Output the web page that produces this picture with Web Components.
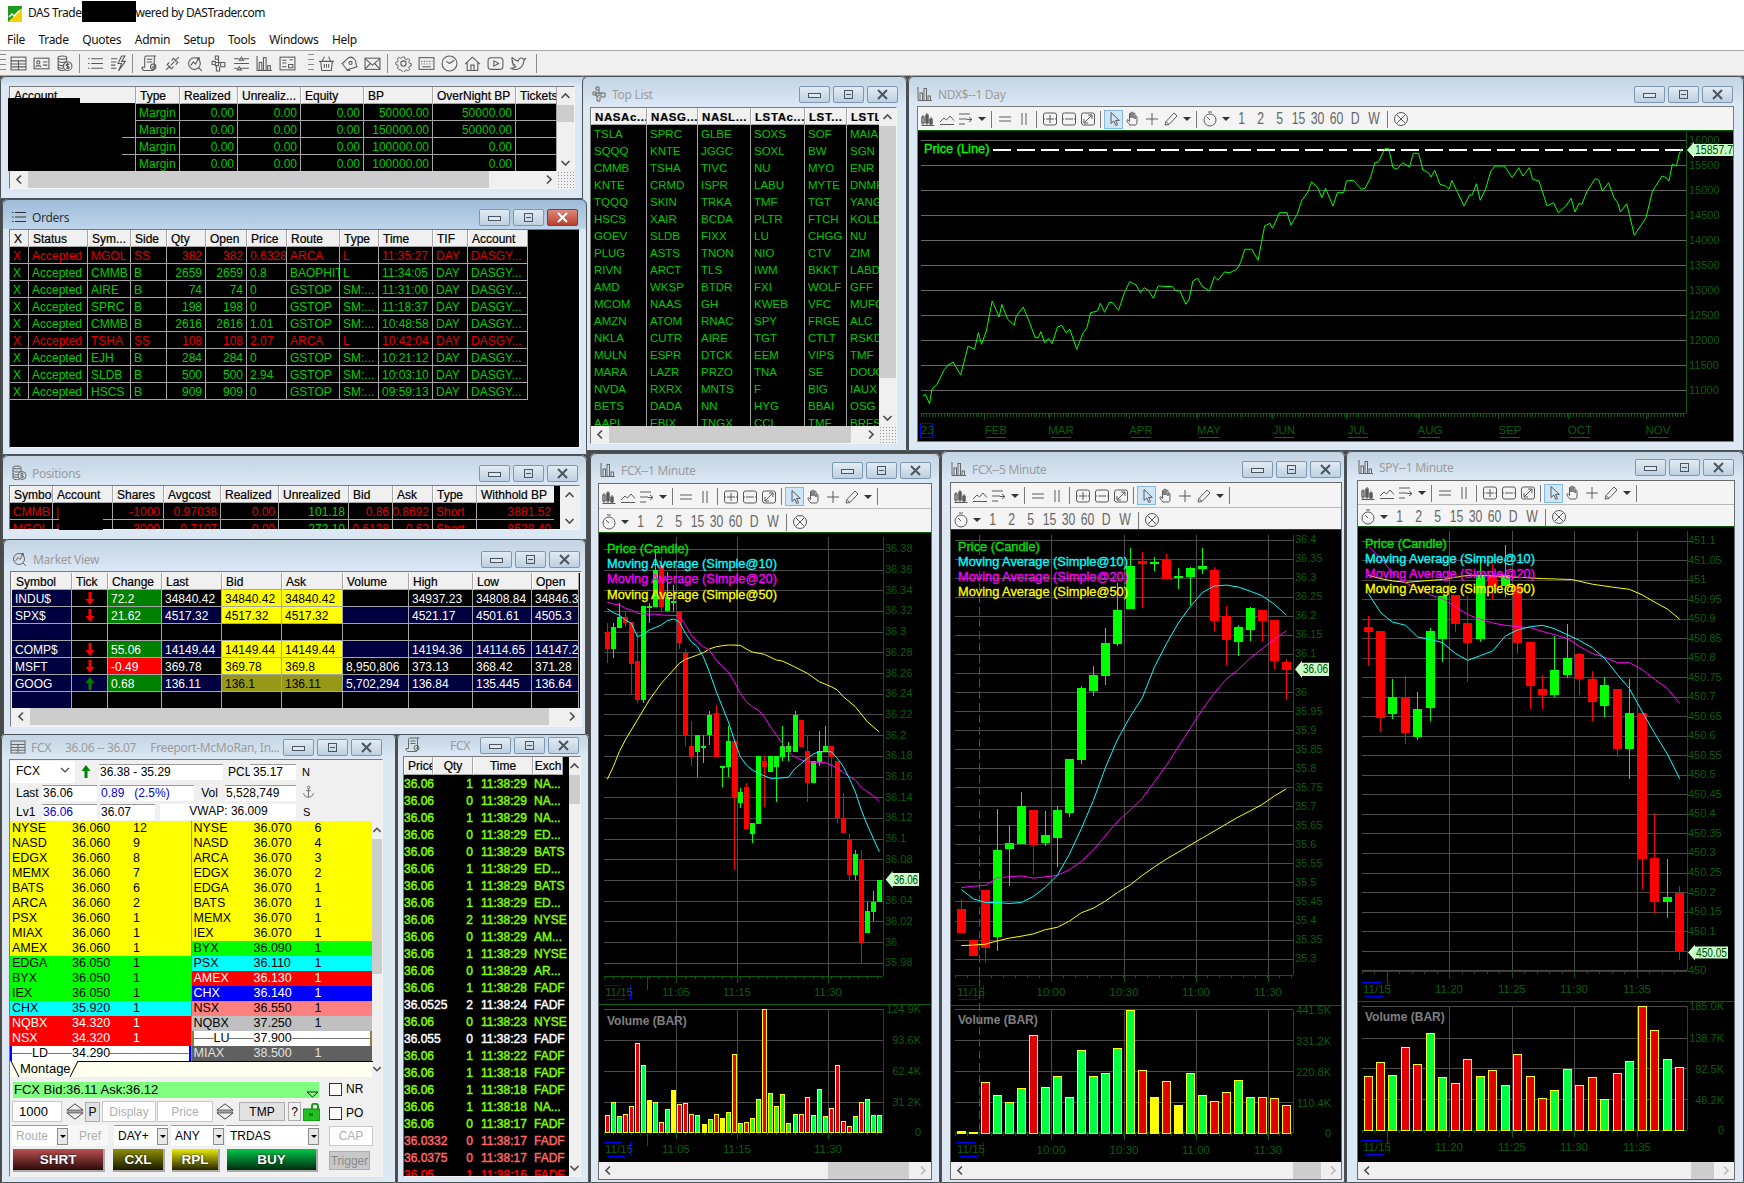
<!doctype html>
<html>
<head>
<meta charset="utf-8">
<title>DAS Trader</title>
<style>
  html, body { margin: 0; background: #4a4a4a; overflow: hidden; }
  body { width: 1744px; height: 1183px; display: flex; flex-direction: column; font-family: "Liberation Sans", Arial, sans-serif; }
</style>
</head>
<body>
<app-header></app-header>
<das-desktop>
  <das-window name="" style="left:0;top:0;width:587px;height:123px;--tb:10px;--ml:9px;--mr:12px;--mb:10px;--nobtn:none">
    <das-pane v="0,17" h="0,461" grip><das-grid data="account"></das-grid></das-pane>
  </das-window>
  <black-box style="left:8px;top:22px;width:72px;height:5px"></black-box>
  <black-box style="left:8px;top:27px;width:127px;height:33px"></black-box>
  <black-box style="left:8px;top:60px;width:114px;height:35px"></black-box>

  <das-window name="Top List" icon="cubes" style="left:582px;top:0;width:325px;height:375px;--tb:31px;--ml:8px;--mr:10px;--mb:7px;--tp:10px;--br:9px;--pl:9px">
    <das-pane v="0,252" h="0,242" grip><das-grid data="toplist"></das-grid></das-pane>
  </das-window>

  <das-window name="NDX$--1 Day" icon="bars" style="left:908px;top:0;width:836px;height:375px;--tb:30px;--ml:9px;--mr:10px;--mb:9px;--tp:10px;--br:11px;--pl:9px;--cb:#7a7a7a">
    <chart-toolbar single style="--rh1:23px"></chart-toolbar>
    <das-chart data="ndx"></das-chart>
  </das-window>

  <das-window name="FCX--1 Minute" icon="bars" style="left:590px;top:377px;width:350px;height:730px;--tb:30px;--ml:8px;--mr:8px;--mb:3px;--tp:9px;--br:9px;--pl:10px;--cb:#6a6a6a">
    <chart-toolbar style="--rh1:24px;--rh2:24px"></chart-toolbar>
    <das-chart data="c1"></das-chart>
    <das-scrollbar orient="h" start="211" len="81" dim style="height:17px"></das-scrollbar>
  </das-window>

  <das-window name="FCX--5 Minute" icon="bars" style="left:941px;top:375px;width:404px;height:732px;--tb:31px;--ml:9px;--mr:3px;--mb:3px;--tp:10px;--br:4px;--pl:10px;--cb:#6a6a6a">
    <chart-toolbar style="--rh1:24px;--rh2:22px"></chart-toolbar>
    <das-chart data="c2"></das-chart>
    <das-scrollbar orient="h" start="324" len="28" dim style="height:17px"></das-scrollbar>
  </das-window>

  <das-window name="SPY--1 Minute" icon="bars" style="left:1346px;top:375px;width:398px;height:732px;--tb:29px;--ml:11px;--mr:9px;--mb:3px;--tp:8px;--br:10px;--pl:12px;--cb:#6a6a6a">
    <chart-toolbar style="--rh1:23px;--rh2:22px"></chart-toolbar>
    <das-chart data="c3"></das-chart>
    <das-scrollbar orient="h" start="315" len="23" dim style="height:17px"></das-scrollbar>
  </das-window>

  <das-window name="Orders" icon="list" active style="left:2px;top:123px;width:585px;height:256px;--tb:30px;--ml:7px;--mr:7px;--mb:7px;--tp:10px;--br:9px;--pl:9px">
    <das-grid data="orders"></das-grid>
  </das-window>

  <das-window name="Positions" icon="coins" style="left:2px;top:379px;width:585px;height:85px;--tb:30px;--ml:7px;--mr:7px;--mb:10px;--tp:10px;--br:9px;--pl:9px">
    <das-pane v="x" vw="19"><das-grid data="positions"></das-grid></das-pane>
  </das-window>
  <black-box style="left:59px;top:428px;width:44px;height:26px"></black-box>

  <das-window name="FCX     36.06 -- 36.07     Freeport-McMoRan, In..." icon="table" style="left:1px;top:657px;width:395px;height:450px;--tb:26px;--ml:8px;--mr:13px;--mb:6px;--tp:6px;--br:14px;--pl:9px">
    <fcx-montage></fcx-montage>
  </das-window>

  <das-window name="FCX" icon="scroll" style="left:397px;top:657px;width:192px;height:450px;--tb:23px;--ml:6px;--mr:8px;--mb:6px;--tp:4px;--br:10px;--pl:8px;--nm:24px">
    <das-pane v="0,29" vw="11"><das-grid data="tns"></das-grid></das-pane>
  </das-window>

  <das-window name="Market View" icon="magnifier" style="left:3px;top:463px;width:583px;height:196px;--tb:32px;--ml:7px;--mr:4px;--mb:8px;--tp:12px;--br:6px;--pl:9px;--pad:1px">
    <das-pane h="0,519"><das-grid data="market"></das-grid></das-pane>
  </das-window>
</das-desktop>

<script>
const FONT = '"Liberation Sans", Arial, sans-serif';
const UI_FONT = '"Noto Sans", "Open Sans", Arial, sans-serif';

const ICONS = {
  table: '<rect x="1" y="2" width="14" height="12"/><path d="M1 5.5h14M8 5.5V14M1 8.5h14M1 11.2h14"/>',
  card: '<rect x="1" y="3" width="14" height="10"/><circle cx="5" cy="7" r="1.5"/><path d="M2.5 11.5c.5-2 4.5-2 5 0M9.5 6.5h4M9.5 9.5h4"/>',
  coins: '<ellipse cx="6" cy="2.5" rx="4" ry="1.5"/><path d="M2 2.5V13c0 2 6 2 7 .8M2 5.5c0 2 8 2 8 0M2 8.5c0 1.6 4 1.8 6 1M2 11c0 1 3 1.5 5 1.5M10 2.5v3"/><circle cx="11" cy="10.5" r="4"/><path d="M12.5 9c-1-.8-3-.5-3 .6s3 .7 3 2-2 1.2-3 .5M11 7.5v6"/>',
  list: '<path d="M1 3.5h1.5M4 3.5h11M1 8h1.5M4 8h11M1 12.5h1.5M4 12.5h11"/>',
  bolt: '<path d="M1 3.5h6M1 6.5h5M1 9.5h4M1 12.5h5M11 1 7.5 8H11l-3 7 6.5-9H11L14 1z"/>',
  scroll: '<path d="M3 14.5h8c1 0 1.5-1 1.5-2v-10c0-1 .5-1.5 1.5-1.5H5c-1 0-1.5.5-1.5 1.5v9H1c0 2 1 3 2 3zM5.5 4h5M5.5 6.5h5"/><circle cx="11.5" cy="11" r="2.5"/><path d="m10.5 11 .8.8 1.5-1.5"/>',
  link: '<path d="M2 14 6 10M14 2l-4 4M5 7l-2 2 4 4 2-2M7 5l2-2 4 4-2 2M6.5 9.5l3-3"/>',
  magnifier: '<circle cx="7" cy="8" r="5.5"/><path d="m11 12 3 3M3.5 10 6 6.5l2 2L11 3M9 2.5h2.5V5"/>',
  cubes: '<path d="M5 1h3v3H5zM2 6h3v3H2zM8 4v3h3M5 7h3v3H5zM10 7h4v4h-4zM6 10v5h3v-4"/>',
  sliders: '<path d="M1 3.5h5M10 3.5h5M6 5l2-3 2 3zM1 8h14M1 12.5h3M8 12.5h7M4 14l2-3 2 3z"/>',
  bars: '<path d="M1 1v13.5h14"/><rect x="3" y="7" width="2.5" height="7.5"/><rect x="7" y="2.5" width="2.5" height="12"/><rect x="11" y="10" width="2.5" height="4.5"/>',
  price: '<rect x="1" y="2" width="14" height="12"/><path d="M3 5h4M3 7.5h4M9 9h4v3H9zM3 11h4M10 4.5h3"/>',
  basket: '<path d="M1 6h14M6 1.5 4 6M10 1.5 12 6M2.5 6l1 8.5h9l1-8.5M6 8.5V12M8 8.5V12M10 8.5V12"/>',
  bell: '<path d="M1 8c3-1 4-6 8-6 3 0 5 3 5 5 0 3 1 4 1 4l-9 3s-1-1-5-6zM5 13c.5 1.5 2 2 3.5 1.3"/><circle cx="9" cy="7.5" r="1.5"/>',
  mail: '<rect x="1" y="3" width="14" height="10.5"/><path d="m1 3.5 7 6 7-6M1 13l5-5M15 13l-5-5"/>',
  gear: '<circle cx="8" cy="8" r="2.5"/><path d="M6.8 1h2.400l.4 2 1.700.7 1.700-1.100 1.700 1.700-1.100 1.700.7 1.700 2 .4v2.400l-2 .4-.7 1.700 1.100 1.700-1.700 1.700-1.700-1.100-1.700.7-.4 2H6.800l-.4-2-1.700-.7L3 14.600l-1.700-1.700 1.100-1.700-.7-1.700-2-.4V6.700l2-.4.7-1.700L1.300 3 3 1.300l1.700 1.100 1.700-.7z" transform="translate(1 1) scale(.875)"/>',
  keyboard: '<rect x="1" y="2.5" width="14" height="11"/><path d="M3 6h1M5.5 6h1M8 6h1M10.5 6h1M13 6h.5M3 8.5h1M5.5 8.5h1M8 8.5h1M10.5 8.5h1M13 8.5h.5M4 11h8"/>',
  clock: '<circle cx="8" cy="8" r="7"/><path d="M8 8 5 6M8 8l4.5-3"/>',
  home: '<path d="M1 8.5 8 2l7 6.5M3 7v7.5h10V7M6.5 14.5v-5h3v5"/>',
  play: '<rect x="1" y="2.5" width="14" height="11" rx="3"/><path d="M6.5 5.5v5L11 8z"/>',
  twitter: '<path d="M1 12.5c3 2 11 2 12-7l1.5-2-2 .5c-1-2-4.5-1.5-4.500 1.500C5.500 5.500 3.500 4 2 2.500c-.5 1.500 0 3 1 4l-1-.3c0 1.300 1 2.500 2 3l-1 .1c.5 1 1.500 1.500 2.500 1.700C4 12 2.500 12.500 1 12.500z"/>',
  candle: '<path d="M3 4v10M7 2v12M11 6v8M1.5 14.5h13"/><rect x="1.8" y="6" width="2.4" height="6"/><rect x="5.8" y="4" width="2.4" height="8" fill="currentColor"/><rect x="9.8" y="8" width="2.4" height="5" fill="currentColor"/>',
  mountain: '<path d="m1 11 4-4 2.5 2L11 5l4 4.5M1 13.5h14"/>',
  lines: '<path d="M1 3h11M1 8h8M1 13h6M11 6l3 2.5-3 2.5M14 8.5H9"/>',
  hh: '<path d="M2 6h12M2 10h12"/>',
  vv: '<path d="M6 2v12M10 2v12"/>',
  plus: '<rect x="1.5" y="2" width="13" height="12" rx="2"/><path d="M8 4v8M4 8h8M1 8h2M13 8h2"/>',
  minus: '<rect x="1.5" y="2" width="13" height="12" rx="2"/><path d="M4 8h8M1 8h2M13 8h2"/>',
  fit: '<rect x="1.5" y="2" width="13" height="12" rx="2"/><path d="m4 12 8-8M8 4h4v4M4 8v4h4"/>',
  arrow: '<path d="M5 1.5v11l2.8-2.500 2 4.500 1.800-.8-2-4.300h3.700z"/>',
  hand: '<path d="M5 14c-2-2-3.5-4-3-5s1.5 0 2.5 1.500V3c0-1.300 1.500-1.300 1.500 0v4-5c0-1.300 2-1.300 2 0v5-4c0-1.300 2-1.300 2 0v5-2c0-1.300 2-1.300 2 0v5c0 2-1 3-1.500 3z"/>',
  cross: '<path d="M8 2v12M2 8h12"/>',
  pencil: '<path d="m2 14 1-3.5L11 2l3 3-8 8.5zM3 10.5 5.5 13"/>',
  timer: '<circle cx="8" cy="9" r="6"/><path d="M8 9 5 6M6 1h4"/>',
  xcircle: '<circle cx="8" cy="8" r="6.5"/><path d="m4 4 8 8M12 4l-8 8"/>',
  anchor: '<circle cx="8" cy="3" r="1.5"/><path d="M8 4.5V15M5 7h6M2 10c0 3 3 5 6 5s6-2 6-5"/>'
};

class DasIcon extends HTMLElement {
  constructor() { super(); this.attachShadow({ mode: 'open' }); }
  connectedCallback() {
    const size = this.getAttribute('size') || 16;
    this.shadowRoot.innerHTML = `<style>:host{display:inline-flex;flex:none;color:#5a5a5a} svg{display:block;fill:none;stroke:currentColor;stroke-width:1}</style>
      <svg width="${size}" height="${size}" viewBox="0 0 16 16">${ICONS[this.getAttribute('name')] || ''}</svg>`;
  }
}
customElements.define('das-icon', DasIcon);

class AppHeader extends HTMLElement {
  constructor() {
    super();
    this.attachShadow({ mode: 'open' });
    const groups = [
      ['grip', 'table', 'card', 'coins', '|', 'list', 'bolt', '|b', 'scroll', 'link', 'magnifier', 'cubes', 'sliders', 'bars', 'price'],
      ['grip', 'basket', 'bell', 'mail', '|', 'gear', 'keyboard', 'clock', 'home', 'play', 'twitter', '|']
    ];
    const tools = groups.map(g => g.map(n => {
      if (n[0] === '|') return `<i class="sep ${n.slice(1)}"></i>`;
      if (n === 'grip') return '<i class="grip"></i>';
      return `<das-icon name="${n}" size="17"></das-icon>`;
    }).join('')).join('');
    this.shadowRoot.innerHTML = `
      <style>
        :host { display: block; flex: none; background: #fff; font: 12px ${UI_FONT}; color: #111; letter-spacing: -.3px; }
        .title { height: 28px; display: flex; align-items: center; padding-left: 8px; white-space: pre; letter-spacing: -.45px; }
        .title svg { margin-right: 6px; }
        .title b { display: inline-block; width: 54px; height: 21px; background: #000; margin-top: -5px; }
        .title span { margin-top: -4px; }
        .menu { height: 22px; display: flex; align-items: center; padding-left: 7px; gap: 13.5px; }
        .tools { box-sizing: border-box; height: 26px; background: #f0f0f0; border-top: 1px solid #a8a8a8; border-bottom: 1px solid #a8a8a8; display: flex; align-items: center; gap: 6px; padding-left: 10px; position: relative; }
        .sep { width: 1px; height: 19px; background: #8a8a8a; margin: 0 1px 0 0; }
        .sep.b { margin: 0 2px 0 -1px; }
        .sep:last-child { margin-left: 3px; }
        .grip { width: 6px; height: 18px; margin: 0 -2px 0 6px; background: repeating-linear-gradient(#8a8a8a 0 1px, transparent 1px 5px); }
        .grip:first-child { position: absolute; left: 0; margin: 0; }
      </style>
      <div class="title">
        <svg width="14" height="16" viewBox="0 0 14 16"><rect width="14" height="16" fill="#1c9c1c"/><path d="M0 16 14 2v14z" fill="#f6d000"/><path d="m1 11 3-3 2 2 6-6" stroke="#fff" fill="none" stroke-width="1.5"/></svg>
        <span>DAS Trade</span><b></b><span>wered by DASTrader.com</span>
      </div>
      <div class="menu"><span>File</span><span>Trade</span><span>Quotes</span><span>Admin</span><span>Setup</span><span>Tools</span><span>Windows</span><span>Help</span></div>
      <div class="tools">${tools}</div>`;
  }
}
customElements.define('app-header', AppHeader);

class DasDesktop extends HTMLElement {
  constructor() {
    super();
    this.attachShadow({ mode: 'open' });
    this.shadowRoot.innerHTML = `<style>:host{display:block;flex:1;position:relative;min-height:0;background:#4a4a4a}</style><slot></slot>`;
  }
}
customElements.define('das-desktop', DasDesktop);

class BlackBox extends HTMLElement {
  constructor() {
    super();
    this.attachShadow({ mode: 'open' });
    this.shadowRoot.innerHTML = `<style>:host{position:absolute;display:block;background:#000}</style>`;
  }
}
customElements.define('black-box', BlackBox);

class DasWindow extends HTMLElement {
  constructor() { super(); this.attachShadow({ mode: 'open' }); }
  connectedCallback() {
    const active = this.hasAttribute('active');
    const name = this.getAttribute('name');
    const icon = this.getAttribute('icon');
    this.shadowRoot.innerHTML = `
      <style>
        :host { position: absolute; display: flex; flex-direction: column; box-sizing: border-box; background: #dce8f4; border-radius: 6px 6px 0 0; outline: 1px solid #4c5358; outline-offset: -1px; overflow: hidden; }
        .bar { flex: none; height: var(--tb); box-sizing: border-box; padding: var(--tp, 0) var(--br, 0) 0 var(--pl, 0); display: flex; align-items: flex-start; gap: 3px;
          background: linear-gradient(${active ? '#9dbbd8, #bed5ea' : '#c2d3e2, #dce8f5'}); }
        .name { flex: 1; min-width: 0; font: 12px/17px ${UI_FONT}; letter-spacing: -.3px; color: ${active ? '#333' : '#9b9b9b'}; white-space: pre; overflow: hidden; display: flex; gap: 5px; }
        .name das-icon { margin-right: var(--nm, 0); color: ${active ? '#333' : '#666'}; }
        .btn { display: var(--nobtn, flex); width: 31px; height: 17px; flex: none; box-sizing: border-box; border: 1px solid #7f97ae; border-radius: 2px; align-items: center; justify-content: center; background: linear-gradient(#e2ebf4, #bdd0e1); }
        .btn.close { background: ${active ? 'linear-gradient(#dd8a7c, #b8402e)' : 'linear-gradient(#e2ebf4, #bdd0e1)'}; border-color: ${active ? '#8a3a30' : '#7f97ae'}; }
        .btn svg { fill: none; stroke: #4a5560; }
        .client { flex: 1; min-height: 0; margin: 0 var(--mr) var(--mb) var(--ml); box-sizing: border-box; display: flex; flex-direction: column; overflow: hidden; background: #f0f0f0; padding: var(--pad, 0);
          border: 1px solid; border-color: var(--cb, #7a7a7a) var(--cb, #f4f4f4) var(--cb, #f4f4f4) var(--cb, #7a7a7a); }
      </style>
      <div class="bar">
        <div class="name">${icon ? `<das-icon name="${icon}"></das-icon>` : ''}${name}</div>
        <div class="btn"><svg width="13" height="8"><rect x=".5" y="2.5" width="12" height="4" fill="#dfe7ef"/></svg></div>
        <div class="btn"><svg width="13" height="11"><rect x="2.5" y="1.5" width="8" height="8"/><path d="M4 5.5h5"/></svg></div>
        <div class="btn close"><svg width="13" height="11" style="stroke:${active ? '#fff' : '#4a5560'}"><path d="m2 1 9 9M11 1l-9 9" stroke-width="2"/></svg></div>
      </div>
      <div class="client"><slot></slot></div>`;
  }
}
customElements.define('das-window', DasWindow);

class DasScrollbar extends HTMLElement {
  constructor() { super(); this.attachShadow({ mode: 'open' }); }
  connectedCallback() {
    const h = this.getAttribute('orient') === 'h';
    const start = +this.getAttribute('start') || 0;
    const len = +this.getAttribute('len') || 0;
    const noThumb = this.hasAttribute('nothumb');
    const chev = (p, c) => `<div class="a"><svg width="11" height="11" viewBox="0 0 11 11"><path d="${p}" fill="none" stroke="${c}" stroke-width="1.7"/></svg></div>`;
    this.shadowRoot.innerHTML = `
      <style>
        :host { display: flex; flex: none; background: #f0f0f0; flex-direction: ${h ? 'row' : 'column'}; overflow: hidden; }
        .a { flex: none; ${h ? 'width:18px' : 'height:18px'}; display: flex; align-items: center; justify-content: center; }
        .t { flex: 1; min-width: 0; min-height: 0; display: flex; flex-direction: ${h ? 'row' : 'column'}; }
        .th { flex: none; background: #cdcdcd; ${h ? `margin-left:${start}px;width:${len}px` : `margin-top:${start}px;height:${len}px`}; }
        .grip { flex: none; width: 17px; background: radial-gradient(#9a9a9a 40%, transparent 45%) 9px 3px / 3px 3px; }
      </style>
      ${chev(h ? 'M7 1.5 3 5.5l4 4' : 'M1.5 7l4-4 4 4', '#505050')}
      <div class="t">${noThumb ? '' : '<div class="th"></div>'}</div>
      ${chev(h ? 'M4 1.5l4 4-4 4' : 'M1.5 4l4 4 4-4', this.hasAttribute('dim') ? '#bbb' : '#505050')}
      ${this.hasAttribute('grip') ? '<div class="grip"></div>' : ''}`;
  }
}
customElements.define('das-scrollbar', DasScrollbar);

class DasPane extends HTMLElement {
  constructor() { super(); this.attachShadow({ mode: 'open' }); }
  connectedCallback() {
    const v = this.getAttribute('v');
    const h = this.getAttribute('h');
    const vw = this.getAttribute('vw') || 17;
    const parts = s => (s || '').split(',');
    const vBar = v === 'x' ? `<das-scrollbar orient="v" nothumb style="width:${vw}px;margin-left:6px"></das-scrollbar>`
      : v ? `<das-scrollbar orient="v" start="${parts(v)[0]}" len="${parts(v)[1]}" style="width:${vw}px"></das-scrollbar>` : '';
    const hBar = h ? `<das-scrollbar orient="h" start="${parts(h)[0]}" len="${parts(h)[1]}" ${this.hasAttribute('grip') ? 'grip' : ''} style="height:17px"></das-scrollbar>` : '';
    this.shadowRoot.innerHTML = `
      <style>
        :host { display: flex; flex-direction: column; flex: 1; min-height: 0; }
        .top { flex: 1; min-height: 0; display: flex; background: #000; }
        slot { display: flex; flex: 1; min-width: 0; }
      </style>
      <div class="top"><slot></slot>${vBar}</div>${hBar}`;
  }
}
customElements.define('das-pane', DasPane);

const arrowSvg = (up, col) => `<svg width="12" height="15" viewBox="0 0 12 15" style="display:block;margin:0 auto"><path d="${up ? 'M6 1 1.5 7h3v7h3V7h3z' : 'M6 14 1.5 8h3V1h3v7h3z'}" fill="${col}"/></svg>`;

const tickers = [
  'TSLA SPRC GLBE SOXS SOF MAIA', 'SQQQ KNTE JGGC SOXL BW SGN', 'CMMB TSHA TIVC NU MYO ENR', 'KNTE CRMD ISPR LABU MYTE DNMR',
  'TQQQ SKIN TRKA TMF TGT YANG', 'HSCS XAIR BCDA PLTR FTCH KOLD', 'GOEV SLDB FIXX LU CHGG NU', 'PLUG ASTS TNON NIO CTV ZIM',
  'RIVN ARCT TLS IWM BKKT LABD', 'AMD WKSP BTDR FXI WOLF GFF', 'MCOM NAAS GH KWEB VFC MUFG', 'AMZN ATOM RNAC SPY FRGE ALC',
  'NKLA CUTR AIRE TGT CTLT RSKD', 'MULN ESPR DTCK EEM VIPS TMF', 'MARA LAZR PRZO TNA SE DOUG', 'NVDA RXRX MNTS F BIG IAUX',
  'BETS DADA NN HYG BBAI OSG', 'AAPL EBIX TNGX CCL TME BRFS'
].map(r => r.split(' '));

const navyCols = new Set([3, 6, 7, 8, 9]);
const GRIDS = {
  account: {
    cols: [126, 44, 58, 63, 63, 69, 83, 41], head: ['Account', 'Type', 'Realized', 'Unrealiz...', 'Equity', 'BP', 'OverNight BP', 'Tickets'],
    align: 'llrrrrrr', color: '#00c800',
    rows: [['', 'Margin', '0.00', '0.00', '0.00', '50000.00', '50000.00', ''], ['', 'Margin', '0.00', '0.00', '0.00', '150000.00', '50000.00', ''],
      ['', 'Margin', '0.00', '0.00', '0.00', '100000.00', '0.00', ''], ['', 'Margin', '0.00', '0.00', '0.00', '100000.00', '0.00', ''], ['', '', '', '', '', '', '', '']]
  },
  orders: {
    cols: [19, 59, 43, 36, 39, 41, 40, 53, 39, 54, 35, 60], head: ['X', 'Status', 'Sym...', 'Side', 'Qty', 'Open', 'Price', 'Route', 'Type', 'Time', 'TIF', 'Account'],
    align: 'llllrrllllll', color: '#00d000',
    rows: [
      ['X', 'Accepted', 'MGOL', 'SS', '382', '382', '0.6328', 'ARCA', 'L', '11:35:27', 'DAY', 'DASGY...'],
      ['X', 'Accepted', 'CMMB', 'B', '2659', '2659', '0.8', 'BAOPHIT', 'L', '11:34:05', 'DAY', 'DASGY...'],
      ['X', 'Accepted', 'AIRE', 'B', '74', '74', '0', 'GSTOP', 'SM:...', '11:31:00', 'DAY', 'DASGY...'],
      ['X', 'Accepted', 'SPRC', 'B', '198', '198', '0', 'GSTOP', 'SM:...', '11:18:37', 'DAY', 'DASGY...'],
      ['X', 'Accepted', 'CMMB', 'B', '2616', '2616', '1.01', 'GSTOP', 'SM:...', '10:48:58', 'DAY', 'DASGY...'],
      ['X', 'Accepted', 'TSHA', 'SS', '108', '108', '2.07', 'ARCA', 'L', '10:42:04', 'DAY', 'DASGY...'],
      ['X', 'Accepted', 'EJH', 'B', '284', '284', '0', 'GSTOP', 'SM:...', '10:21:12', 'DAY', 'DASGY...'],
      ['X', 'Accepted', 'SLDB', 'B', '500', '500', '2.94', 'GSTOP', 'SM:...', '10:03:10', 'DAY', 'DASGY...'],
      ['X', 'Accepted', 'HSCS', 'B', '909', '909', '0', 'GSTOP', 'SM:...', '09:59:13', 'DAY', 'DASGY...']
    ],
    style: (r) => (r === 0 || r === 5) ? 'color:#e00000' : ''
  },
  positions: {
    cols: [43, 60, 51, 57, 58, 70, 44, 40, 44, 78], head: ['Symbol', 'Account', 'Shares', 'Avgcost', 'Realized', 'Unrealized', 'Bid', 'Ask', 'Type', 'Withhold BP'],
    align: 'llrrrrrrlr', color: '#e00000',
    rows: [['CMMB', '|', '-1000', '0.97038', '0.00', '101.18', '0.86', '0.8692', 'Short', '3881.52'], ['MGOL', '|', '-3000', '0.7107', '0.00', '272.10', '0.6128', '0.62', 'Short', '8528.40']],
    style: (r, c) => c === 5 ? 'color:#00d000' : ''
  },
  market: {
    cols: [60, 36, 54, 60, 60, 61, 66, 64, 59, 47], head: ['Symbol', 'Tick', 'Change', 'Last', 'Bid', 'Ask', 'Volume', 'High', 'Low', 'Open'],
    align: 'lclllllllll', color: '#fff',
    rows: [
      ['INDU$', { h: arrowSvg(false, '#ff0000') }, '72.2', '34840.42', '34840.42', '34840.42', '', '34937.23', '34808.84', '34846.38'],
      ['SPX$', { h: arrowSvg(false, '#ff0000') }, '21.62', '4517.32', '4517.32', '4517.32', '', '4521.17', '4501.61', '4505.3'],
      ['', '', '', '', '', '', '', '', '', ''],
      ['COMP$', { h: arrowSvg(false, '#ff0000') }, '55.06', '14149.44', '14149.44', '14149.44', '', '14194.36', '14114.65', '14147.27'],
      ['MSFT', { h: arrowSvg(false, '#ff0000') }, '-0.49', '369.78', '369.78', '369.8', '8,950,806', '373.13', '368.42', '371.28'],
      ['GOOG', { h: arrowSvg(true, '#008000') }, '0.68', '136.11', '136.1', '136.11', '5,702,294', '136.84', '135.445', '136.64'],
      ['', '', '', '', '', '', '', '', '', '']
    ],
    style: (r, c, v) => {
      if (c === 0) return 'background:#000040';
      if (c === 1) return r === 5 ? 'background:#000040' : '';
      if (c === 2 && v) return v[0] === '-' ? 'background:#ff0000' : 'background:#008000';
      if ((c === 4 || c === 5) && v) return r === 5 ? 'background:#989818;color:#000' : 'background:#ffff00;color:#000';
      if (navyCols.has(c) && r % 2) return 'background:#000040';
      return '';
    }
  },
  toplist: {
    cols: [56, 51, 53, 54, 42, 33], head: ['NASAc...', 'NASG...', 'NASL...', 'LSTAc...', 'LST...', 'LSTL'], headStyle: 'font-weight:bold;letter-spacing:.6px;',
    align: 'llllll', color: '#00c800', rows: tickers, noRowLines: true, fontSize: 11.5
  },
  tns: {
    cols: [29, 40, 60, 30], head: ['Price', 'Qty', 'Time', 'Exch'], headAlign: 'lccc', headh: 18, free: true, align: 'lrll', filler: true,
    color: '#80ff00',
    rows: [
      ['36.06', '1', '11:38:29', 'NA...'], ['36.06', '0', '11:38:29', 'NA...'], ['36.06', '1', '11:38:29', 'NA...'], ['36.06', '0', '11:38:29', 'ED...'],
      ['36.06', '0', '11:38:29', 'BATS'], ['36.06', '1', '11:38:29', 'ED...'], ['36.06', '1', '11:38:29', 'BATS'], ['36.06', '1', '11:38:29', 'ED...'],
      ['36.06', '2', '11:38:29', 'NYSE'], ['36.06', '0', '11:38:29', 'AM...'], ['36.06', '1', '11:38:29', 'NYSE'], ['36.06', '0', '11:38:29', 'AR...'],
      ['36.06', '1', '11:38:28', 'FADF'], ['36.0525', '2', '11:38:24', 'FADF'], ['36.06', '0', '11:38:23', 'NYSE'], ['36.055', '0', '11:38:23', 'FADF'],
      ['36.06', '1', '11:38:22', 'FADF'], ['36.06', '1', '11:38:18', 'FADF'], ['36.06', '1', '11:38:18', 'FADF'], ['36.06', '1', '11:38:18', 'NA...'],
      ['36.06', '0', '11:38:17', 'FADF'], ['36.0332', '0', '11:38:17', 'FADF'], ['36.0375', '0', '11:38:17', 'FADF'], ['36.05', '1', '11:38:16', 'FADF']
    ],
    style: r => (r === 13 || r === 15) ? 'color:#fff' : (r === 21 || r === 22) ? 'color:#ff6666' : r === 23 ? 'color:#ff0000' : ''
  }
};

class DasGrid extends HTMLElement {
  constructor() { super(); this.attachShadow({ mode: 'open' }); }
  connectedCallback() {
    const g = GRIDS[this.getAttribute('data')];
    const al = { l: 'flex-start', r: 'flex-end', c: 'center' };
    const bar = '1px solid #a6a6a6';
    const cellCss = g.free
      ? 'overflow:visible;-webkit-text-stroke:.45px currentColor;padding:1px 0 0 0;'
      : `border-right:${bar};${g.noRowLines ? '' : `border-bottom:${bar};`}`;
    const freePad = c => g.free ? ['', '', 'padding-left:8px;', 'padding-left:1px;'][c] : '';
    const head = g.head.map((t, i) => `<div class="h" style="justify-content:${al[(g.headAlign || 'l'.repeat(20))[i]]};${g.headStyle || ''}">${t}</div>`).join('');
    const filler = g.filler ? '<div class="gap"></div>' : '';
    const rows = g.rows.map((row, r) => row.map((v, c) => {
      const txt = typeof v === 'object' ? v.h : v;
      const st = g.style ? g.style(r, c, typeof v === 'string' ? v : '') : '';
      return `<div class="c" style="justify-content:${al[g.align[c]]};${freePad(c)}${st}">${txt}</div>`;
    }).join('') + filler).join('');
    this.shadowRoot.innerHTML = `
      <style>
        :host { display: block; flex: 1; min-width: 0; min-height: 0; background: #000; overflow: hidden; }
        .g { display: grid; grid-template-columns: ${g.cols.map(c => c + 'px').join(' ')} ${g.filler ? '1fr' : ''}; grid-template-rows: ${g.headh || 17}px; grid-auto-rows: 17px; font: ${g.fontSize || 12}px/16px ${FONT}; color: ${g.color}; }
        .h, .c { display: flex; align-items: center; overflow: hidden; white-space: nowrap; box-sizing: border-box; padding: 1px 3px 0; }
        .h { background: #f0f0f0; color: #000; border-right: 1px solid #a6a6a6; border-bottom: 1px solid #a6a6a6; border-left: 1px solid #fff; -webkit-text-stroke: .2px #000; }
        .c { ${cellCss} }
      </style>
      <div class="g">${head}${filler}${rows}</div>`;
  }
}
customElements.define('das-grid', DasGrid);

class ChartToolbar extends HTMLElement {
  constructor() { super(); this.attachShadow({ mode: 'open' }); }
  connectedCallback() {
    const r1 = ['candle', 'mountain', 'lines', '^', '|', 'hh', 'vv', '|', 'plus', 'minus', 'fit', '|', '*arrow', 'hand', 'cross', 'pencil', '^', '|'];
    const r2 = ['timer', '^', '1', '2', '5', '15', '30', '60', 'D', 'W', '|', 'xcircle'];
    const item = n => {
      if (n === '|') return '<i class="sep"></i>';
      if (n === '^') return '<i class="caret"></i>';
      if (n[0] === '*') return `<span class="it on"><das-icon name="${n.slice(1)}"></das-icon></span>`;
      if (ICONS[n]) return `<span class="it"><das-icon name="${n}"></das-icon></span>`;
      return `<span class="it"><span class="tx">${n}</span></span>`;
    };
    const rows = this.hasAttribute('single') ? [r1.concat(r2)] : [r1, r2];
    this.shadowRoot.innerHTML = `
      <style>
        :host { display: block; flex: none; background: #f4f4f4; border-bottom: 1px solid #006000; font: 17px ${FONT}; color: #666; }
        .row { display: flex; align-items: center; overflow: hidden; height: var(--rh1); box-sizing: border-box; padding-top: 1px; }
        .row + .row { height: var(--rh2); border-top: 1px solid #b8b8b8; padding-top: 3px; }
        .it { width: 19px; height: 19px; flex: none; display: flex; align-items: center; justify-content: center; box-sizing: border-box; }
        .it.on { background: #cfe5f8; border: 1px solid #86b8e2; }
        .tx { display: inline-block; transform: scaleX(.72); }
        .sep { width: 1px; height: 17px; margin: 0 3px; background: #777; flex: none; }
        .caret { flex: none; width: 13px; display: flex; justify-content: center; }
        .caret::after { content: ""; border: 4px solid transparent; border-top: 4px solid #333; border-bottom: 0; }
      </style>
      ${rows.map(r => `<div class="row">${r.map(item).join('')}</div>`).join('')}`;
  }
}
customElements.define('chart-toolbar', ChartToolbar);

// chart data, coordinates read off the zoomed screenshot
const ma = (pts, fx, fy) => pts.map(p => fx(p[0]).toFixed(1) + ',' + fy(p[1]).toFixed(1)).join(' ');
const range = (from, step, n, dec) => Array.from({ length: n }, (_, i) => String(+(from + step * i).toFixed(dec)));

const c1x = z => 590 + z / 3, c1y = z => 450 + z / 3, c1v = z => 850 + z / 3;
const c2x = z => 940 + z / 3, zy = z => 450 + z / 2.139, c3x = z => 1345 + z / 3;

const CHARTS = {
  c1: {
    ox: 599, oy: 533, w: 333, h: 628, left: 604, axis: 883, gridTop: 549.3, gridStep: 20.7, labels: range(36.38, -0.02, 21, 2), labelX: 885,
    vlines: [676, 737, 828], vTop: 537, vBot: 976, axisY: 976, tickStep: 9.1, tall: [647], timeY: 992,
    times: [[676, '11:05'], [737, '11:15'], [828, '11:30']], date: [604, 630], dateY: [985, 1142], sepY: 1004, cw: 5, bw: 5, fx: c1x, fy: c1y, vy: c1v,
    candles: [[52,546,597,518,638,'r'],[70,532,597,520,623,'g'],[88,501,533,458,533,'g'],[106,501,518,487,530,'r'],[124,516,641,516,732,'r'],[142,633,749,548,760,'r'],[160,468,749,468,760,'g'],[178,468,470,458,518,'g'],[196,360,470,300,470,'g'],[214,345,470,320,485,'r'],[232,440,483,365,483,'g'],[250,454,457,405,483,'g'],[268,484,578,484,598,'r'],[286,610,856,598,888,'r'],[304,888,920,813,948,'r'],[322,856,906,856,980,'g'],[340,887,890,855,940,'g'],[358,795,856,783,885,'g'],[379,790,920,765,920,'r'],[397,949,952,949,1012,'g'],[415,873,950,828,980,'g'],[433,873,1043,873,1260,'r'],[451,1026,1059,1015,1073,'g'],[469,1011,1137,998,1137,'r'],[487,1120,1151,1120,1180,'g'],[505,918,1121,918,1121,'g'],[523,933,950,918,1072,'r'],[541,918,965,918,965,'g'],[559,918,950,918,1055,'g'],[577,888,920,828,932,'g'],[595,888,905,876,932,'g'],[617,795,905,783,905,'g'],[634,810,890,810,890,'r'],[652,903,998,857,1055,'r'],[670,933,998,933,998,'g'],[688,903,935,843,948,'g'],[706,888,905,828,905,'g'],[724,888,920,888,980,'r'],[742,933,1105,933,1118,'r'],[760,1105,1150,1030,1150,'r'],[778,1168,1276,1152,1290,'r'],[796,1212,1276,1200,1290,'g'],[814,1228,1478,1200,1540,'r'],[832,1383,1448,1355,1448,'g'],[850,1355,1385,1323,1413,'g'],[868,1290,1355,1290,1355,'g']],
    mas: [
      ['#ffff00', [[52,988],[70,950],[88,905],[106,870],[124,840],[142,810],[160,780],[178,750],[196,725],[214,700],[232,680],[250,660],[268,640],[286,628],[304,622],[322,615],[340,608],[358,597],[379,590],[397,587],[415,585],[451,586],[469,597],[487,606],[523,613],[559,630],[577,633],[613,650],[652,670],[688,695],[724,710],[742,720],[760,740],[796,770],[832,815],[868,846]]],
      ['#ff00ff', [[52,457],[70,462],[88,464],[106,475],[124,480],[142,490],[178,493],[196,492],[214,495],[268,497],[286,525],[304,555],[322,575],[340,590],[358,600],[379,630],[397,650],[415,665],[433,695],[451,730],[469,755],[487,770],[505,780],[523,800],[541,830],[559,855],[577,880],[595,905],[613,920],[634,930],[652,935],[670,937],[688,937],[706,938],[724,945],[742,955],[760,967],[778,980],[796,990],[814,1012],[832,1025],[850,1037],[868,1055]]],
      ['#00ffff', [[52,476],[70,488],[88,495],[106,510],[124,520],[142,560],[160,553],[178,540],[214,525],[232,512],[250,507],[268,515],[286,550],[304,575],[322,590],[340,620],[358,665],[379,725],[397,770],[415,815],[433,870],[451,920],[469,945],[487,960],[505,970],[541,985],[559,985],[595,982],[613,958],[634,940],[652,925],[670,912],[688,905],[706,905],[724,905],[742,925],[760,950],[778,985],[796,1025],[814,1080],[832,1125],[850,1165],[868,1205]]]
    ],
    legend: [607, [548.7, 563.7, 578.7, 594]], tag: [885.7, 919, 873, 886, '36.06'],
    volGrid: [1009, 1040, 1071, 1102, 1132], volLabels: ['124.9K', '93.6K', '62.4K', '31.2K', '0'], volRight: 921, volTime: 1149, volTitleY: 1020.7, volBase: 847,
    bars: [[52,796,'r'],[70,755,'g'],[88,798,'g'],[106,793,'r'],[124,769,'r'],[142,580,'r'],[160,646,'g'],[178,751,'y'],[196,757,'g'],[214,817,'r'],[232,778,'g'],[250,721,'y'],[268,763,'r'],[286,760,'r'],[304,793,'r'],[322,796,'g'],[343,823,'y'],[361,808,'g'],[379,793,'r'],[397,805,'y'],[415,787,'g'],[433,613,'r'],[451,820,'g'],[469,817,'r'],[487,805,'g'],[505,748,'g'],[523,478,'r'],[541,730,'g'],[559,769,'g'],[577,733,'g'],[595,820,'g'],[616,793,'g'],[634,793,'r'],[652,742,'r'],[670,796,'g'],[688,718,'g'],[706,799,'g'],[724,775,'r'],[742,646,'r'],[760,814,'r'],[778,829,'r'],[796,799,'g'],[814,757,'r'],[832,748,'g'],[850,796,'g'],[868,796,'g']]
  },
  c2: {
    ox: 951, oy: 530, w: 390, h: 632, left: 955, axis: 1293, gridTop: 540.2, gridStep: 19.04, labels: range(36.4, -0.05, 23, 2), labelX: 1295,
    vlines: [1051, 1124, 1196, 1268], vTop: 535, vBot: 976, axisY: 975, tickStep: 12, tall: [], timeY: 992, dashX: 979,
    times: [[1051, '10:00'], [1124, '10:30'], [1196, '11:00'], [1268, '11:30']], date: [956, 983], dateY: [985, 1142], sepY: 1005, cw: 9, bw: 9, fx: c2x, fy: zy, vy: zy,
    candles: [[64,982,1033,960,1033,'r'],[100,1048,1082,1048,1082,'r'],[136,941,1065,941,1097,'r'],[172,856,1042,768,1072,'g'],[208,841,853,803,933,'g'],[244,762,843,732,843,'g'],[280,769,844,769,908,'r'],[316,824,841,772,848,'g'],[352,769,830,762,892,'g'],[388,661,776,660,784,'g'],[424,509,663,505,672,'g'],[460,481,516,463,526,'g'],[496,413,483,381,503,'g'],[532,342,415,285,420,'g'],[571,248,340,210,340,'g'],[607,237,244,218,338,'r'],[643,240,243,228,258,'g'],[679,234,275,222,275,'r'],[715,269,272,252,298,'g'],[751,252,272,250,332,'g'],[787,248,255,210,266,'g'],[823,257,365,250,387,'r'],[859,356,406,334,462,'r'],[895,379,411,374,441,'g'],[931,338,385,336,409,'g'],[967,342,366,342,410,'r'],[1003,364,451,364,468,'r'],[1039,454,471,447,535,'r']],
    mas: [
      ['#ffff00', [[64,1060],[100,1059],[136,1057],[172,1050],[208,1044],[244,1040],[280,1035],[316,1026],[352,1021],[388,1008],[424,990],[460,980],[496,965],[532,947],[571,930],[607,910],[643,892],[679,875],[715,860],[751,845],[787,830],[823,815],[859,800],[895,785],[931,772],[967,758],[1003,740],[1039,725]]],
      ['#ff00ff', [[64,936],[100,933],[136,931],[172,915],[208,913],[244,911],[280,916],[316,913],[352,910],[388,898],[424,880],[460,856],[496,825],[532,795],[571,770],[607,745],[643,710],[679,675],[715,635],[751,595],[787,555],[823,520],[859,490],[895,470],[931,445],[967,425],[1003,405],[1039,387]]],
      ['#00ffff', [[64,940],[100,960],[136,968],[172,968],[208,970],[244,968],[280,955],[316,935],[352,910],[388,865],[424,810],[460,750],[496,680],[532,620],[571,570],[607,530],[643,465],[679,415],[715,370],[751,335],[787,305],[823,291],[859,289],[895,293],[931,302],[967,312],[1003,330],[1039,353]]]
    ],
    legend: [958, [546.8, 561.7, 576.7, 591.7]], tag: [1295, 1329, 662.7, 676, '36.06'],
    volGrid: [1009.6, 1040.5, 1071.8, 1102.6, 1132.6], volLabels: ['441.5K', '331.2K', '220.8K', '110.4K', '0'], volRight: 1331, volTime: 1150, volTitleY: 1020, volBase: 1460,
    bars: [[64,1457,'y'],[100,1459,'y'],[136,1351,'r'],[172,1379,'g'],[208,1394,'g'],[244,1364,'g'],[280,1252,'r'],[316,1362,'g'],[352,1338,'g'],[388,1385,'g'],[424,1284,'g'],[460,1338,'g'],[496,1332,'g'],[532,1280,'g'],[571,1197,'g'],[607,1327,'r'],[643,1383,'y'],[679,1349,'r'],[715,1402,'y'],[751,1332,'g'],[787,1379,'g'],[823,1392,'r'],[859,1374,'r'],[895,1347,'g'],[931,1383,'g'],[967,1383,'r'],[1003,1387,'r'],[1039,1402,'r']]
  },
  c3: {
    ox: 1358, oy: 527, w: 376, h: 635, left: 1362, axis: 1687, gridTop: 541, gridStep: 19.53, labels: range(451.1, -0.05, 23, 2), labelX: 1688,
    vlines: [1449, 1512, 1574, 1637], vTop: 531, vBot: 971, axisY: 971, tickStep: 12.5, tall: [1387], timeY: 988.6,
    times: [[1449, '11:20'], [1512, '11:25'], [1574, '11:30'], [1637, '11:35']], date: [1362, 1389], dateY: [982, 1140], sepY: 1001.7, cw: 9, bw: 9, fx: c3x, fy: zy, vy: zy,
    candles: [[70,379,389,355,461,'r'],[107,387,573,387,603,'r'],[142,528,565,490,575,'g'],[182,528,605,484,629,'r'],[218,554,613,518,620,'g'],[256,387,552,381,580,'g'],[292,312,404,312,454,'g'],[331,310,372,310,390,'r'],[368,370,413,312,497,'r'],[406,270,404,230,410,'g'],[443,270,292,240,320,'r'],[481,268,290,203,315,'g'],[517,290,413,290,436,'r'],[556,411,505,411,554,'r'],[592,511,524,481,554,'r'],[628,471,524,398,528,'g'],[667,445,481,372,488,'g'],[703,437,489,435,523,'r'],[742,489,539,473,580,'r'],[778,503,548,486,571,'g'],[817,511,640,511,656,'r'],[853,563,640,490,704,'g'],[892,563,875,563,939,'r'],[928,873,967,777,990,'r'],[967,956,967,875,1001,'g'],[1004,948,1072,933,1090,'r']],
    mas: [
      ['#ffff00', [[70,268],[107,275],[142,280],[182,283],[292,277],[368,268],[406,268],[517,272],[592,275],[680,277],[742,287],[800,293],[853,298],[892,310],[928,325],[967,340],[1004,362]]],
      ['#ff00ff', [[70,205],[107,232],[142,262],[182,285],[218,295],[256,310],[292,318],[331,335],[368,352],[406,362],[443,370],[481,375],[517,378],[556,380],[592,388],[628,395],[667,403],[703,420],[742,435],[778,443],[817,455],[853,455],[892,470],[928,490],[967,510],[1004,542]]],
      ['#00ffff', [[70,307],[107,348],[142,368],[182,375],[218,400],[256,405],[292,412],[331,435],[368,450],[406,440],[443,430],[481,398],[517,385],[556,378],[592,375],[628,382],[667,395],[703,407],[742,423],[778,445],[817,480],[853,510],[892,560],[928,605],[967,650],[1004,703]]]
    ],
    legend: [1365, [543.5, 558.5, 573.4, 588.4]], tag: [1688, 1728, 946.5, 958.6, '450.05'],
    volGrid: [1006, 1038, 1068.5, 1099.6, 1130], volLabels: ['185.0K', '138.7K', '92.5K', '46.2K', '0'], volRight: 1724, volTime: 1146.6, volTitleY: 1017, volBase: 1455,
    bars: [[70,1340,'r'],[107,1310,'r'],[142,1336,'g'],[182,1276,'r'],[218,1314,'r'],[256,1246,'g'],[292,1342,'g'],[331,1353,'r'],[368,1302,'r'],[406,1340,'g'],[443,1327,'r'],[481,1359,'g'],[517,1291,'r'],[556,1340,'r'],[592,1387,'r'],[628,1368,'g'],[667,1323,'g'],[703,1359,'r'],[742,1342,'r'],[778,1389,'g'],[817,1332,'r'],[853,1306,'g'],[892,1190,'r'],[928,1240,'r'],[967,1302,'g'],[1004,1319,'r']]
  },
  ndx: {
    ox: 918, oy: 130, w: 816, h: 311, line: true,
    pts: [[33,975],[38,970],[46,998],[50,955],[60,940],[72,900],[80,883],[90,873],[104,912],[118,825],[130,835],[137,785],[143,820],[152,780],[163,690],[176,738],[181,700],[192,745],[204,763],[208,735],[221,708],[233,755],[243,800],[249,800],[254,782],[261,815],[268,802],[275,818],[285,768],[293,763],[301,785],[308,775],[321,835],[333,785],[340,770],[347,725],[360,720],[365,697],[373,724],[382,693],[388,695],[399,718],[410,665],[420,632],[432,642],[440,665],[447,650],[455,658],[464,682],[473,645],[500,647],[505,658],[514,660],[525,700],[531,685],[538,630],[547,622],[555,645],[569,660],[578,617],[585,628],[597,603],[607,605],[620,595],[627,575],[635,535],[648,535],[660,568],[672,465],[682,457],[687,472],[700,425],[714,425],[721,462],[733,430],[741,390],[753,363],[760,332],[772,352],[779,380],[786,352],[800,405],[808,365],[820,365],[825,330],[838,328],[853,355],[860,352],[870,320],[878,275],[885,273],[897,233],[904,233],[912,290],[920,295],[930,275],[943,288],[950,247],[960,247],[968,297],[978,305],[983,318],[990,298],[1000,340],[1010,345],[1017,355],[1022,328],[1033,365],[1045,405],[1055,372],[1060,372],[1068,338],[1075,388],[1085,355],[1095,300],[1103,285],[1120,285],[1135,320],[1147,290],[1155,315],[1167,290],[1173,325],[1185,330],[1200,405],[1212,395],[1221,425],[1235,405],[1245,382],[1252,423],[1260,397],[1265,400],[1275,360],[1290,323],[1297,328],[1303,360],[1315,335],[1325,380],[1332,395],[1337,423],[1349,398],[1363,493],[1385,440],[1397,360],[1415,315],[1423,320],[1428,330],[1434,280],[1442,285],[1447,250],[1451,233]]
  }
};

class DasChart extends HTMLElement {
  constructor() { super(); this.attachShadow({ mode: 'open' }); }
  connectedCallback() {
    const c = CHARTS[this.getAttribute('data')];
    const body = c.line ? this.lineChart(c) : this.candleChart(c);
    this.shadowRoot.innerHTML = `
      <style>
        :host { display: block; flex: 1; min-height: 0; background: #000; overflow: hidden; }
        svg { display: block; }
        text { font: 11px ${FONT}; dominant-baseline: central; }
        polyline { stroke-width: 1; }
        .leg { font-size: 12.8px; stroke-width: .3px; }
        .vt { font-size: 12px; font-weight: bold; fill: #808080; }
        .tm { font-size: 11.5px; }
      </style>
      <svg width="${c.w}" height="${c.h}" viewBox="${c.ox} ${c.oy} ${c.w} ${c.h}">${body}</svg>`;
  }
  hl(y, x1, x2, col) { const p = Math.floor(y) + .5; return `<line x1="${x1}" x2="${x2}" y1="${p}" y2="${p}" stroke="${col}"/>`; }
  vl(x, y1, y2, col, extra = '') { const p = Math.floor(x) + .5; return `<line x1="${p}" x2="${p}" y1="${y1}" y2="${y2}" stroke="${col}" ${extra}/>`; }
  txt(x, y, s, col, extra = '') { return `<text x="${x}" y="${y}" fill="${col}" ${extra}>${s}</text>`; }
  tag([tip, x2, y1, y2, s]) {
    const m = (y1 + y2) / 2;
    return `<polygon points="${tip},${m} ${tip + 7},${y1 - 2} ${tip + 7},${y1} ${x2},${y1} ${x2},${y2} ${tip + 7},${y2} ${tip + 7},${y2 + 2}" fill="#c8ffc8"/>` +
      this.txt(tip + 8, m, s, '#004a00', `textLength="${x2 - tip - 9}" lengthAdjust="spacingAndGlyphs" style="font-size:12px"`);
  }
  candleChart(c) {
    const G = '#4e4a4a', A = '#0a5c0a', T = '#0b5e0b';
    const red = '#ff0000', grn = '#00ff00';
    let s = '<g shape-rendering="crispEdges">';
    c.labels.forEach((_, i) => { s += this.hl(c.gridTop + i * c.gridStep, c.left, c.axis, G); });
    c.vlines.forEach(x => { s += this.vl(x, c.vTop, c.vBot, G) + this.vl(x, c.volGrid[0], c.volGrid[4], G); });
    c.volGrid.forEach(y => { s += this.hl(y, c.left, c.axis, G); });
    if (c.dashX) s += this.vl(c.dashX, c.vTop, c.volGrid[4], '#0a6a6a', 'stroke-dasharray="8 4"');
    s += this.vl(c.axis, c.vTop, c.axisY, A) + this.vl(c.axis, c.volGrid[0], c.volGrid[4], A);
    s += this.hl(c.axisY, c.left, c.axis, A) + this.hl(c.volGrid[4], c.left, c.axis, A) + this.hl(c.sepY, c.ox, c.ox + c.w, A);
    [c.axisY, c.volGrid[4]].forEach(y => {
      for (let x = c.left; x < c.axis; x += c.tickStep) s += this.vl(x, y, y + 3, A);
      c.vlines.concat(c.tall).forEach((x, i) => { s += this.vl(x, y, y + (i >= c.vlines.length ? 14 : 7), A); });
    });
    c.dateY.forEach(y => {
      const [a, b] = c.date;
      s += this.hl(y, a, b - 8, '#0000ff') + this.vl(b, y, y + 14, '#0000ff') + this.hl(y + 14, a + 3, b - 5, '#0000ff');
    });
    // candles
    c.candles.forEach(([x, t, b, wt, wb, k]) => {
      const col = k === 'r' ? red : grn, cx = c.fx(x);
      s += this.vl(cx, c.fy(wt), c.fy(wb), col);
      const top = Math.round(c.fy(t)), h = Math.max(2, Math.round(c.fy(b)) - top);
      s += `<rect x="${Math.floor(cx) - (c.cw - 1) / 2}" y="${top}" width="${c.cw}" height="${h}" fill="${col}"/>`;
    });
    // volume bars
    const base = Math.round(c.vy(c.volBase));
    c.bars.forEach(([x, t, k]) => {
      const fill = k === 'r' ? '#e00000' : k === 'g' ? '#00ff40' : '#ffff00';
      const top = Math.round(c.vy(t)), l = Math.floor(c.fx(x)) - (c.bw - 1) / 2;
      s += `<rect x="${l + .5}" y="${top + .5}" width="${c.bw - 1}" height="${Math.max(0, base - top)}" fill="${fill}" stroke="#ffff00"/>`;
    });
    s += '</g>';
    c.mas.forEach(([col, pts]) => { s += `<polyline fill="none" stroke="${col}" points="${ma(pts, c.fx, c.fy)}"/>`; });
    // the price tag sits where one axis label would be
    c.labels.forEach((l, i) => {
      const y = c.gridTop + i * c.gridStep - 1;
      if (y < c.tag[2] - 3 || y > c.tag[3] + 3) s += this.txt(c.labelX, y, l, T);
    });
    c.volLabels.forEach((l, i) => { s += this.txt(c.volRight, c.volGrid[i], l, T, 'text-anchor="end"'); });
    c.times.forEach(([x, l]) => {
      s += this.txt(x, c.timeY, l, T, 'text-anchor="middle" class="tm"') + this.txt(x, c.volTime, l, T, 'text-anchor="middle" class="tm"');
    });
    c.dateY.forEach(y => { s += this.txt(c.date[0] + 1, y + 7, '11/15', T, 'class="tm"'); });
    const [lx, ly] = c.legend;
    const leg = [['Price (Candle)', '#00e600'], ['Moving Average (Simple@10)', '#00ffff'], ['Moving Average (Simple@20)', '#ff00ff'], ['Moving Average (Simple@50)', '#ffff00']];
    leg.forEach(([t, col], i) => { s += this.txt(lx, ly[i], t, col, `class="leg" stroke="${col}"`); });
    s += this.txt(lx, c.volTitleY, 'Volume (BAR)', '#808080', 'class="vt"');
    s += this.tag(c.tag);
    return s;
  }
  lineChart(c) {
    const fx = z => 905 + z / 1.869, fy = z => 70 + z / 3;
    const G = '#6a6666', A = '#0a5c0a', T = '#0b5e0b';
    const labels = range(16000, -500, 11, 0);
    const months = [[996, 'FEB'], [1061, 'MAR'], [1141, 'APR'], [1209, 'MAY'], [1284, 'JUN'], [1358, 'JUL'], [1430, 'AUG'], [1510, 'SEP'], [1580, 'OCT'], [1658, 'NOV']];
    let s = '<g shape-rendering="crispEdges">';
    labels.forEach((l, i) => { s += this.hl(139 + i * 25, 921, 1686, G); });
    s += this.vl(1686, 131, 412, A) + this.hl(412, 921, 1686, A);
    for (let x = 921; x < 1684; x += 2.9) s += this.vl(x, 412, 416, A);
    months.forEach(([x]) => { s += this.vl(x - 12, 412, 418, A) + this.hl(436, x - 10, x + 10, '#444'); });
    s += `<line x1="993" x2="1684" y1="149" y2="149" stroke="#fff" stroke-width="2" stroke-dasharray="18 6"/>`;
    s += `<rect x="920.5" y="422.5" width="12" height="14" fill="none" stroke="#0000ff"/>`;
    s += '</g>';
    s += `<polyline fill="none" stroke="#00ff00" points="${ma(c.pts, fx, fy)}"/>`;
    labels.forEach((l, i) => { s += this.txt(1689, 139 + i * 25, l, T); });
    months.forEach(([x, t]) => { s += this.txt(x, 429, t, T, 'text-anchor="middle" class="tm"'); });
    s += this.txt(921, 429, '23', T, 'class="tm"');
    s += this.txt(924, 147, 'Price (Line)', '#00ff00', 'class="leg" stroke="#00ff00"');
    s += this.tag([1687, 1734, 143, 155, '15857.7']);
    return s;
  }
}
customElements.define('das-chart', DasChart);

const BID = [['NYSE','36.060','12','y'],['NASD','36.060','9','y'],['EDGX','36.060','8','y'],['MEMX','36.060','7','y'],['BATS','36.060','6','y'],['ARCA','36.060','2','y'],['PSX','36.060','1','y'],['MIAX','36.060','1','y'],['AMEX','36.060','1','y'],['EDGA','36.050','1','g'],['BYX','36.050','1','g'],['IEX','36.050','1','g'],['CHX','35.920','1','c'],['NQBX','34.320','1','r'],['NSX','34.320','1','r'],['LD','34.290','','ld']];
const ASK = [['NYSE','36.070','6','y'],['NASD','36.070','4','y'],['ARCA','36.070','3','y'],['EDGX','36.070','2','y'],['EDGA','36.070','1','y'],['BATS','36.070','1','y'],['MEMX','36.070','1','y'],['IEX','36.070','1','y'],['BYX','36.090','1','g'],['PSX','36.110','1','c'],['AMEX','36.130','1','r'],['CHX','36.140','1','b'],['NSX','36.550','1','p'],['NQBX','37.250','1','s'],['LU','37.900','','lu'],['MIAX','38.500','1','k']];

class FcxMontage extends HTMLElement {
  constructor() {
    super();
    this.attachShadow({ mode: 'open' });
    const depth = rows => rows.map(([e, p, q, k]) => `<div class="d ${k}"><span>${e}</span><span>${p}</span><span>${q}</span></div>`).join('');
    const spin = `<svg class="spin" width="18" height="21" viewBox="0 0 20 21"><path d="M1 9 10 2l9 7zM1 12l9 7 9-7z" fill="none" stroke="#333"/><path d="M1 10.5h18" stroke="#999"/></svg>`;
    const caret = `<i class="dd"></i>`;
    this.shadowRoot.innerHTML = `
      <style>
        :host { display: flex; flex-direction: column; flex: 1; min-height: 0; background: #f0f0f0; font: 12px ${FONT}; color: #000; }
        .row { display: flex; align-items: center; flex: none; }
        .f { box-sizing: border-box; background: #fff; border-top: 1px solid #9a9a9a; height: 16px; line-height: 15px; padding-left: 1px; white-space: pre; flex: none; }
        .l { flex: none; box-sizing: border-box; padding-left: 6px; }
        .combo { width: 65px; height: 22px; background: #fff; box-sizing: border-box; padding: 0 0 2px 6px; display: flex; align-items: center; justify-content: space-between; flex: none; }
        .main { display: flex; height: 256px; flex: none; }
        .left { width: 363px; display: flex; flex-direction: column; }
        .depth { display: grid; grid-template-columns: 1fr 1fr; gap: 0 1px; height: 240px; background: #888; flex: none; }
        .col { display: grid; grid-auto-rows: 15px; }
        .d { display: grid; grid-template-columns: 60px 61px 1fr; align-items: center; padding-left: 2px; line-height: 15px; font-size: 12.5px; white-space: nowrap; }
        .y { background: #ffff00; } .g { background: #00ff00; } .c { background: #00ffff; } .r { background: #ff0000; color: #fff; }
        .b { background: #0000ff; color: #fff; } .p { background: #ff8080; } .s { background: #c0c0c0; } .k { background: #606060; color: #e0e0e0; }
        .ld, .lu { background: linear-gradient(#777, #777) center / 100% 1px no-repeat, #fff; }
        .ld span, .lu span { background: #fff; justify-self: start; }
        .ld span:first-child, .lu span:first-child { margin-left: 20px; }
        .ld span:last-child, .lu span:last-child { display: none; }
        .ld { border-left: 2px solid #0000ff; border-right: 2px solid #0000ff; padding-left: 0; }
        .lu { border-left: 2px solid #8a8040; border-right: 2px solid #8a8040; padding-left: 0; }
        .tabs { height: 16px; flex: none; background: #fffff0; position: relative; font-size: 13px; line-height: 16px; box-sizing: border-box; }
        .tabs svg { position: absolute; left: 0; top: 0; }
        .tabs span { margin-left: 10px; }
        .order { flex: 1; display: flex; min-height: 0; }
        .ol { width: 311px; padding-top: 5px; box-sizing: border-box; display: flex; flex-direction: column; gap: 3px; }
        .or { flex: 1; padding: 5px 0 0 8px; display: flex; flex-direction: column; align-items: flex-start; }
        .bidask { margin-left: 3px; width: 306px; height: 16px; background: #80ff80; font-size: 13px; line-height: 16px; padding-left: 1px; box-sizing: border-box; position: relative; }
        .bidask svg { position: absolute; right: 0; bottom: 0; }
        .box { box-sizing: border-box; height: 21px; flex: none; display: flex; align-items: center; justify-content: center; background: #fff; border: 1px solid #c8c8c8; }
        .box.dis { color: #b0b0b0; }
        .btn { background: #e1e1e1; border: 1px solid #adadad; box-sizing: border-box; height: 20px; flex: none; display: flex; align-items: center; justify-content: center; }
        .spin { flex: none; }
        .dd { flex: none; width: 11px; height: 17px; background: #e8e8e8; border: 1px solid #8a8a8a; box-sizing: border-box; display: flex; align-items: center; justify-content: center; }
        .dd::after { content: ""; border: 3px solid transparent; border-top: 3px solid #000; border-bottom: 0; }
        .sel { box-sizing: border-box; height: 21px; background: #fff; border-top: 1px solid #9a9a9a; display: flex; align-items: center; justify-content: space-between; padding: 0 0 0 4px; flex: none; }
        .big { height: 23px; box-sizing: border-box; display: flex; align-items: center; justify-content: center; color: #fff; font: bold 13.5px ${FONT}; text-shadow: 0 0 2px #000; border-right: 2px solid #aaa; border-bottom: 2px solid #aaa; flex: none; }
        .chk { width: 13px; height: 13px; background: #fff; border: 1px solid #333; box-sizing: border-box; flex: none; margin-right: 4px; }
        .cl { display: flex; align-items: center; }
      </style>
      <div class="row" style="height:23px">
        <div class="combo">FCX<svg width="10" height="7" style="margin-right:5px"><path d="m1 1 4 4 4-4" fill="none" stroke="#444" stroke-width="1.2"/></svg></div>
        <div style="width:24px;flex:none">${arrowSvg(true, '#008000').replace('margin:0 auto', 'margin:0 0 0 5px')}</div>
        <div class="f" style="width:124px">36.38 - 35.29</div>
        <div style="width:27px;padding-left:5px;flex:none;box-sizing:border-box">PCL</div>
        <div class="f" style="width:46px;padding-left:3px">35.17</div>
        <div style="margin-left:6px;font-size:11px">N</div>
      </div>
      <div class="row" style="height:19px">
        <div class="l" style="width:32px">Last</div>
        <div class="f" style="width:55px">36.06</div>
        <div class="f" style="width:94px;margin-left:3px;color:#0000e0">0.89   (2.5%)</div>
        <div style="width:31px;text-align:center;flex:none">Vol</div>
        <div class="f" style="width:71px">5,528,749</div>
        <div style="margin-left:6px"><das-icon name="anchor" size="13"></das-icon></div>
      </div>
      <div class="row" style="height:19px">
        <div class="l" style="width:32px">Lv1</div>
        <div class="f" style="width:55px;color:#0000e0">36.06</div>
        <div class="f" style="width:55px;margin-left:3px">36.07</div>
        <div class="f" style="width:136px;margin-left:5px;border:0;text-align:center">VWAP: 36.009</div>
        <div style="margin-left:7px;font-size:11px">S</div>
      </div>
      <div class="main">
        <div class="left">
          <div class="depth"><div class="col">${depth(BID)}</div><div class="col">${depth(ASK)}</div></div>
          <div class="tabs">
            <svg width="363" height="16"><path d="M1 0 9 16M68 0 60 16M68 .5H363" stroke="#000" fill="none"/></svg>
            <span>Montage</span>
          </div>
        </div>
        <das-scrollbar orient="v" start="0" len="135" style="width:10px"></das-scrollbar>
      </div>
      <div class="order">
        <div class="ol">
          <div class="bidask">FCX Bid:36.11 Ask:36.12
            <svg width="13" height="7"><path d="M1 1h11L6.5 6z" fill="none" stroke="#222"/></svg>
          </div>
          <div class="row" style="height:21px;padding-left:2px">
            <div class="box" style="width:50px;justify-content:flex-start;padding-left:6px;font-size:13px">1000</div>
            <span style="margin-left:4px;display:flex">${spin}</span>
            <div class="btn" style="width:15px;margin-left:1px">P</div>
            <div class="box dis" style="width:54px;margin-left:2px">Display</div>
            <div class="box dis" style="width:56px;margin-left:1px">Price</div>
            <span style="margin-left:3px;display:flex">${spin}</span>
            <div class="btn" style="width:46px;height:19px;margin-left:5px">TMP</div>
            <div class="btn" style="width:13px;height:19px;margin-left:3px;background:#f0f0f0">?</div>
            <svg width="17" height="18" viewBox="0 0 17 18" style="margin-left:2px"><rect y="6" width="17" height="12" fill="#22c022" stroke="#0a800a"/><path d="M9 6V3c0-3 6-3 6 0v3" fill="none" stroke="#1a9a1a" stroke-width="2"/><rect x="6" y="10" width="4" height="3" fill="#0a800a"/></svg>
          </div>
          <div class="row" style="height:21px;padding-left:2px">
            <div class="sel" style="width:56px;color:#b0b0b0">Route${caret}</div>
            <div class="sel" style="width:40px;color:#b0b0b0;justify-content:center;background:#f7f7f7;border:0">Pref</div>
            <div class="sel" style="width:54px;margin-left:6px">DAY+${caret}</div>
            <div class="sel" style="width:53px;margin-left:3px">ANY${caret}</div>
            <div class="sel" style="width:93px;margin-left:2px">TRDAS${caret}</div>
          </div>
          <div class="row" style="height:23px;padding-left:3px">
            <div class="big" style="width:92px;background:linear-gradient(#b85050,#2c0a0a)">SHRT</div>
            <div class="big" style="width:52px;margin-left:8px;background:linear-gradient(#8f8f00,#181800)">CXL</div>
            <div class="big" style="width:48px;margin-left:7px;background:linear-gradient(#eaea00,#242400)">RPL</div>
            <div class="big" style="width:91px;margin-left:7px;background:linear-gradient(#00c848,#002a10)">BUY</div>
          </div>
        </div>
        <div class="or">
          <div class="cl"><i class="chk"></i>NR</div>
          <div class="cl" style="margin-top:10px"><i class="chk"></i>PO</div>
          <div class="box dis" style="width:44px;height:20px;margin-top:6px">CAP</div>
          <div class="btn" style="width:41px;height:19px;margin-top:5px;color:#8a8a8a;background:#c8c8c8">Trigger</div>
        </div>
      </div>`;
  }
}
customElements.define('fcx-montage', FcxMontage);
</script>
</body>
</html>
